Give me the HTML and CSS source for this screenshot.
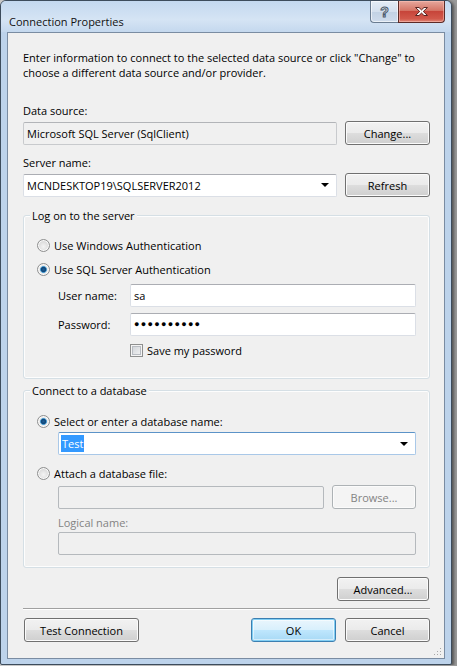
FILE: index.html
```html
<!DOCTYPE html>
<html>
  <head>
    <title>Connection Properties</title>
    <meta charset="UTF-8" />
    <link rel="stylesheet" href="styles.css">
  </head>
  <body>
    <div class="window">
      <div class="titlebar">
        <span class="caption">Connection Properties</span>
        <div class="caption-buttons">
          <button class="cap-btn help" title="Help">?</button>
          <button class="cap-btn close" title="Close">
            <svg width="17" height="11" viewBox="0 0 17 11">
              <path d="M2.5 1.5h3.5l2.5 2.4 2.5-2.4h3.5l-4.2 4 4.2 4h-3.5l-2.5-2.4-2.5 2.4h-3.5l4.2-4z"
                    fill="#fff" stroke="#5a2420" stroke-width="1" stroke-linejoin="round" />
            </svg>
          </button>
        </div>
      </div>

      <div class="client">
        <p class="intro">
          Enter information to connect to the selected data source or click "Change" to
          choose a different data source and/or provider.
        </p>

        <div class="field-label first">Data source:</div>
        <div class="field-row">
          <div class="textbox readonly">Microsoft SQL Server (SqlClient)</div>
          <button class="btn">Change...</button>
        </div>

        <div class="field-label">Server name:</div>
        <div class="field-row">
          <div class="textbox combo">
            <span>MCNDESKTOP19\SQLSERVER2012</span>
            <span class="arrow"></span>
          </div>
          <button class="btn">Refresh</button>
        </div>

        <div class="group logon">
          <div class="group-title">Log on to the server</div>
          <label class="option first"><span class="radio"></span>Use Windows Authentication</label>
          <label class="option second"><span class="radio checked"></span>Use SQL Server Authentication</label>

          <div class="cred-row user-row">
            <span class="cred-label">User name:</span>
            <div class="textbox">sa</div>
          </div>
          <div class="cred-row pass-row">
            <span class="cred-label">Password:</span>
            <div class="textbox password">●●●●●●●●●●</div>
          </div>
          <label class="option save"><span class="checkbox"></span>Save my password</label>
        </div>

        <div class="group database">
          <div class="group-title">Connect to a database</div>
          <label class="option first"><span class="radio checked"></span>Select or enter a database name:</label>
          <div class="textbox combo focused db-combo">
            <span class="selected">Test</span>
            <span class="arrow"></span>
          </div>

          <label class="option attach"><span class="radio"></span>Attach a database file:</label>
          <div class="field-row file-row">
            <div class="textbox disabled"></div>
            <button class="btn" disabled>Browse...</button>
          </div>
          <div class="field-label muted">Logical name:</div>
          <div class="textbox disabled logical"></div>
        </div>

        <div class="advanced-row">
          <button class="btn advanced">Advanced...</button>
        </div>

        <div class="separator"></div>

        <div class="dialog-buttons">
          <button class="btn test">Test Connection</button>
          <button class="btn default">OK</button>
          <button class="btn">Cancel</button>
        </div>

        <svg class="grip" width="8" height="8" viewBox="0 0 8 8">
          <rect x="6" y="0" width="1" height="1" fill="#a8a8a8" />
          <rect x="3" y="3" width="1" height="1" fill="#a8a8a8" />
          <rect x="6" y="3" width="1" height="1" fill="#a8a8a8" />
          <rect x="0" y="6" width="1" height="1" fill="#a8a8a8" />
          <rect x="3" y="6" width="1" height="1" fill="#a8a8a8" />
          <rect x="6" y="6" width="1" height="1" fill="#a8a8a8" />
        </svg>
      </div>
    </div>
  </body>
</html>
```

FILE: styles.css
```css
body {
  margin: 0;
  background: linear-gradient(to right, #c9c9c9 0, #9a9a9a 100%);
  font-family: "Open Sans", "Liberation Sans", sans-serif;
  font-size: 11px;
  color: #000;
}

.window {
  box-sizing: border-box;
  width: 452px;
  height: 665px;
  border: 1px solid #3d4c5c;
  border-radius: 6px 6px 2px 2px;
  background: #bdd3eb;
  padding: 0 6px 5px 6px;
  display: flex;
  flex-direction: column;
  box-shadow: 2px 1px 3px rgba(0, 0, 0, 0.45);
}

/* caption bar */
.titlebar {
  height: 31px;
  display: flex;
  align-items: flex-start;
  margin: 0 -6px;
  padding: 0 6px;
  border-radius: 5px 5px 0 0;
  background: linear-gradient(#c3d8ef, #d5e4f4 60%, #c4d8ee);
}

.caption {
  padding: 13px 0 0 2px;
  line-height: 15px;
  color: #111;
}

.caption-buttons {
  margin-left: auto;
  display: flex;
  height: 22px;
}

.cap-btn {
  border: 1px solid #6a7c90;
  border-top: none;
  padding: 0;
  height: 22px;
  display: flex;
  align-items: center;
  justify-content: center;
}

.cap-btn.help {
  width: 28px;
  border-right: none;
  border-radius: 0 0 0 4px;
  background: linear-gradient(#e4ecf5, #d4e0ee 50%, #c2d2e4 51%, #cfdcec);
  box-shadow: inset 0 0 0 1px rgba(255, 255, 255, 0.6);
  font-family: "Liberation Sans", Arial, sans-serif;
  font-size: 14px;
  font-weight: bold;
  color: #f4f7fb;
  -webkit-text-stroke: 1px #4a5a6c;
}

.cap-btn.close {
  width: 47px;
  border-color: #5c2b27;
  border-radius: 0 0 4px 0;
  background: linear-gradient(#e6a79c, #d57566 45%, #c7453a 50%, #d2594b 85%, #e08c7c);
  box-shadow: inset 0 0 0 1px rgba(255, 200, 190, 0.5);
}

.client {
  flex: 1;
  position: relative;
  background: #f0f0f0;
  border: 1px solid #7a8ca2;
  padding: 17px 14px 0 15px;
}

.intro {
  margin: 0;
  line-height: 15px;
}

.field-label {
  margin-top: 10px;
  line-height: 15px;
}

.field-label.first {
  margin-top: 23px;
}

.field-row {
  margin-top: 3px;
  display: flex;
  align-items: center;
  gap: 8px;
}

/* text boxes and combo boxes */
.textbox {
  box-sizing: border-box;
  height: 23px;
  flex: 1;
  background: #fff;
  border: 1px solid #dbdfe6;
  border-top-color: #abadb3;
  border-radius: 2px;
  padding: 0 3px;
  line-height: 21px;
  white-space: nowrap;
}

.textbox.readonly {
  background: #f0f0f0;
  border-color: #c8cacd;
  border-top-color: #b2b4b8;
}

.textbox.disabled {
  background: #f0f0f0;
  border-color: #b5b9bd;
}

.combo {
  display: flex;
  justify-content: space-between;
  align-items: center;
}

.arrow {
  width: 0;
  height: 0;
  margin-right: 4px;
  border-left: 4px solid transparent;
  border-right: 4px solid transparent;
  border-top: 4px solid #000;
}

.textbox.focused {
  border-color: #a9c8e8;
  border-top-color: #5b93c8;
}

.selected {
  background: #3399ff;
  color: #fff;
  line-height: 17px;
  padding: 0 1px;
  margin-left: -1px;
}

.password {
  font-family: "Liberation Sans", Arial, sans-serif;
  font-size: 9px;
  letter-spacing: 1.3px;
  padding-left: 3px;
}

/* push buttons */
.btn {
  box-sizing: border-box;
  width: 85px;
  height: 24px;
  padding: 0;
  border: 1px solid #707070;
  border-radius: 3px;
  background: linear-gradient(#f2f2f2 0%, #ebebeb 48%, #dddddd 52%, #cfcfcf 100%);
  box-shadow: inset 0 0 0 1px #fbfbfb;
  font-family: inherit;
  font-size: 11px;
  color: #000;
}

.btn:disabled {
  border-color: #adb2b5;
  background: #f4f4f4;
  color: #838383;
}

.btn.default {
  border-color: #3c7fb1;
  background: linear-gradient(#eaf6fd 0%, #d9f0fc 48%, #bee6fd 52%, #a7d9f5 100%);
  box-shadow: inset 0 0 0 1px #82cff4, inset 0 0 0 2px rgba(255, 255, 255, 0.5);
}

/* group boxes: the title sits on the top border */
.group {
  margin-top: 18px;
  padding: 0 13px 20px 13px;
  border: 1px solid #d5dfe5;
  border-radius: 3px;
  box-shadow: inset 0 0 0 1px #fdfdfd;
}

.group-title {
  display: table;
  margin: -8px 0 0 -7px;
  padding: 0 2px;
  background: #f0f0f0;
  line-height: 15px;
}

.group.database {
  margin-top: 11px;
  padding-bottom: 12px;
}

.option {
  display: flex;
  align-items: center;
  gap: 4px;
  height: 16px;
}

.option.first {
  margin-top: 14px;
}

.database .option.first {
  margin-top: 15px;
}

.option.second {
  margin-top: 8px;
}

.radio {
  box-sizing: border-box;
  width: 13px;
  height: 13px;
  border-radius: 50%;
  border: 1px solid #8e8f8f;
  background: radial-gradient(circle at 50% 60%, #f4f4f4 0, #dedede 55%, #d0d0d0 100%);
  box-shadow: inset 0 0 0 1px #fafafa;
}

.radio.checked {
  background: radial-gradient(circle, #1b5e98 0, #0f4577 28%, #5fb1e4 42%, #e6e6e6 48%, #f4f4f4 100%);
}

.checkbox {
  box-sizing: border-box;
  width: 13px;
  height: 13px;
  border: 1px solid #8e8f8f;
  background: linear-gradient(135deg, #cbcfd5, #f6f6f6);
  box-shadow: inset 0 0 0 1px #f4f4f4, inset 0 0 0 2px #b8bcc2;
}

.cred-row {
  margin-left: 21px;
  display: flex;
  align-items: center;
}

.user-row {
  margin-top: 7px;
}

.pass-row {
  margin-top: 6px;
}

.cred-label {
  width: 72px;
}

.option.save {
  margin: 6px 0 0 93px;
}

.db-combo {
  margin: 3px 0 0 21px;
}

.option.attach {
  margin-top: 10px;
}

.file-row {
  margin: 4px 0 0 21px;
}

.file-row .textbox {
  flex: none;
  width: 266px;
}

.field-label.muted {
  margin: 6px 0 0 21px;
  color: #838383;
}

.logical {
  margin: 2px 0 0 21px;
}

.advanced-row {
  margin-top: 9px;
  display: flex;
  justify-content: flex-end;
}

.btn.advanced {
  width: 92px;
  margin-right: 1px;
}

.separator {
  margin-top: 7px;
  border-top: 1px solid #a0a0a0;
  border-bottom: 1px solid #fff;
}

.dialog-buttons {
  margin-top: 8px;
  display: flex;
  gap: 9px;
}

.btn.test {
  width: 115px;
  margin: 0 auto 0 1px;
}

.grip {
  position: absolute;
  right: 2px;
  bottom: 2px;
}
```
